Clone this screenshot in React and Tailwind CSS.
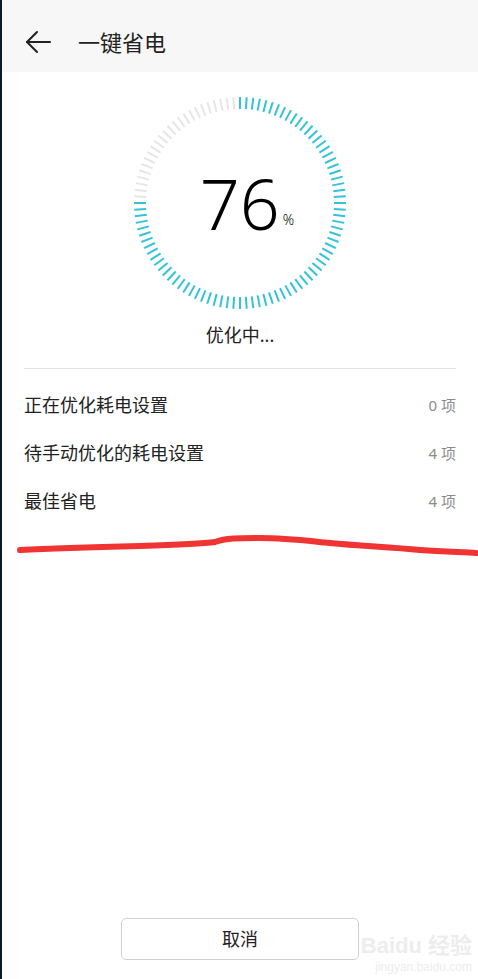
import React from "react";

const rows = [
  { label: "正在优化耗电设置", count: "0 项" },
  { label: "待手动优化的耗电设置", count: "4 项" },
  { label: "最佳省电", count: "4 项" },
];

function Ring({ percent }) {
  const total = 100;
  const cx = 107;
  const cy = 107;
  const ticks = [];
  for (let i = 0; i < total; i++) {
    // start at top, go clockwise
    const a = (i / total) * Math.PI * 2 - Math.PI / 2;
    const r1 = 94;
    const r2 = 106;
    ticks.push(
      <line
        key={i}
        x1={cx + r1 * Math.cos(a)}
        y1={cy + r1 * Math.sin(a)}
        x2={cx + r2 * Math.cos(a)}
        y2={cy + r2 * Math.sin(a)}
        stroke={i < percent ? "#33c3d8" : "#e6e6e6"}
        strokeWidth="2"
      />
    );
  }
  return (
    <div className="relative w-[214px] h-[214px]">
      <svg width="214" height="214" viewBox="0 0 214 214">
        {ticks}
      </svg>
      <div className="absolute inset-0 flex items-center justify-center">
        <span className="text-[70px] font-light leading-none text-black ml-[14px]">{percent}</span>
        <span className="text-[14px] font-light text-black self-end mb-[80px] ml-[3px]">%</span>
      </div>
    </div>
  );
}

export default function App() {
  return (
    <div
      className="relative w-[478px] h-[979px] bg-white border-l-2 border-[#0b1a2a] overflow-hidden flex flex-col"
      style={{ fontFamily: '"Noto Sans", "Noto Sans CJK SC", sans-serif' }}
    >
      {/* 标题栏 */}
      <div className="h-[72px] bg-[#f7f7f7] flex items-center pt-[12px] px-[22px] shrink-0">
        <svg width="28" height="24" viewBox="0 0 28 24" fill="none" stroke="#222" strokeWidth="2" strokeLinecap="round" strokeLinejoin="round">
          <path d="M13 2 L3 12 L13 22" />
          <path d="M3 12 H26" />
        </svg>
        <span className="ml-[26px] text-[22px] text-[#222]">一键省电</span>
      </div>

      {/* 进度环 */}
      <div className="flex flex-col items-center mt-[24px]">
        <Ring percent={76} />
        <div className="mt-[12px] text-[18px] leading-[26px] text-[#222]">优化中...</div>
      </div>

      <div className="mx-[22px] mt-[20px] border-t border-[#e3e3e3]" />

      <div className="mt-[12px]">
        {rows.map((r) => (
          <div key={r.label} className="h-[48px] flex items-center justify-between px-[22px]">
            <span className="text-[18px] text-[#222]">{r.label}</span>
            <span className="text-[15px] text-[#8a8a8a]">{r.count}</span>
          </div>
        ))}
      </div>

      {/* 手绘红线 */}
      <svg className="mt-[10px] -ml-[2px]" width="478" height="30" viewBox="0 0 478 30" fill="none">
        <path
          d="M20 15 C60 13 100 12 140 11 C170 10 200 9 215 7 C225 3 240 3 260 3 C285 3 300 5 330 8 C360 11 390 12 420 15 C445 17 465 17 476 18"
          stroke="#f03333"
          strokeWidth="6"
          strokeLinecap="round"
        />
      </svg>

      <div className="flex-1" />

      {/* 取消按钮 */}
      <div className="flex justify-center mb-[19px]">
        <button className="w-[238px] h-[42px] border border-[#cfcfcf] rounded-[5px] bg-white text-[18px] text-[#222]">
          取消
        </button>
      </div>

      {/* 水印 */}
      <div className="absolute right-[6px] bottom-[6px] flex flex-col items-end text-[#ededed] leading-none pointer-events-none">
        <span className="text-[22px] font-bold" style={{ fontFamily: '"Liberation Sans", "Noto Sans CJK SC", sans-serif' }}>
          Baidu 经验
        </span>
        <span className="text-[12px] mt-[4px]" style={{ fontFamily: '"Liberation Sans", sans-serif' }}>
          jingyan.baidu.com
        </span>
      </div>
    </div>
  );
}
